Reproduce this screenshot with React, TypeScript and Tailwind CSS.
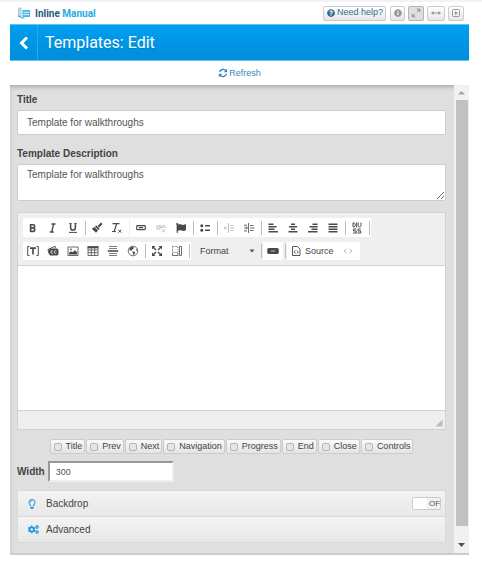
import React from "react";
import { FaCogs, FaFlag, FaInfoCircle, FaQuestionCircle, FaRegLightbulb } from "react-icons/fa";

interface IconProps {
  children: React.ReactNode;
}

// line icon on a 12 x 12 grid
const Icon = ({ children }: IconProps) => (
  <svg
    viewBox="0 0 12 12"
    className="size-3 shrink-0"
    fill="none"
    stroke="currentColor"
    strokeWidth="1"
    aria-hidden="true"
  >
    {children}
  </svg>
);

const Logo = () => (
  <svg viewBox="0 0 14 12" className="h-3 w-3.5 shrink-0" aria-hidden="true">
    <path d="M1.500 1.500 4 .8v7.500l-2.500.8z" fill="#c9e3ef" stroke="#8db9cd" strokeWidth=".8" />
    <path d="M1.200 9.500c1.500-.3 2.800.2 3.800 1.500h2.500" fill="none" stroke="#5a9dbd" strokeWidth="1.100" />
    <path d="M5.500 3H13v7H5.500z" fill="#4bb4e4" />
    <path d="M6.500 5.300H12M6.500 7.600H12" stroke="#e4f5fd" strokeWidth="1" />
  </svg>
);

const RefreshIcon = () => (
  <svg viewBox="0 0 12 12" className="size-2.5" fill="none" stroke="currentColor" strokeWidth="1.700" aria-hidden="true">
    <path d="M2 5a4.200 4.200 0 0 1 7.500-1.600M10 7a4.200 4.200 0 0 1-7.500 1.600" />
    <path d="M11 1v4H7zM1 11V7h4z" fill="currentColor" stroke="none" />
  </svg>
);

interface ToolProps {
  label: string;
  disabled?: boolean;
  children: React.ReactNode;
}

const Tool = ({ label, disabled, children }: ToolProps) => (
  <button
    type="button"
    aria-label={label}
    disabled={disabled}
    className="flex size-5 shrink-0 items-center justify-center text-[#4a4a4a] disabled:text-[#bbb]"
  >
    {children}
  </button>
);

const Separator = () => <span className="ml-0.5 mr-px h-3.5 w-px shrink-0 bg-[#bcbcbc]" />;

const headerButton =
  "flex h-[15px] items-center justify-center rounded-xs border border-[#ccc] bg-linear-to-b from-white to-[#e6e6e6]";

const HeaderTools = () => (
  <div className="flex gap-[3px]">
    <button type="button" className={`${headerButton} mr-px gap-px px-0.5 text-[9px] text-[#2f6f8f]`}>
      <FaQuestionCircle className="mx-px size-2" />
      Need help?
    </button>
    <button type="button" aria-label="Info" className={`${headerButton} w-[15px] text-[#999]`}>
      <FaInfoCircle className="size-2" />
    </button>
    <button
      type="button"
      aria-label="Expand"
      className="flex h-[15px] w-4 items-center justify-center rounded-xs border border-[#b5b5b5] bg-[#dedede] text-[#999]"
    >
      <Icon>
        <path d="M7 5 9.500 2.500M5 7 2.500 9.500" />
        <path d="M6.300 1.800h3.900v3.900zM1.800 6.300v3.900h3.900z" fill="currentColor" stroke="none" />
      </Icon>
    </button>
    <button type="button" aria-label="Full width" className={`${headerButton} w-[18px] text-[#999]`}>
      <Icon>
        <path d="M2 6h8" />
        <path d="M1 6l2.600-2v4zM11 6 8.400 4v4z" fill="currentColor" stroke="none" />
      </Icon>
    </button>
    <button type="button" aria-label="Dock" className={`${headerButton} w-4 text-[#999]`}>
      <Icon>
        <rect x="2.500" y="2.500" width="7" height="7" rx="1" />
        <path d="M4.800 4v4l3.200-2z" fill="currentColor" stroke="none" />
      </Icon>
    </button>
  </div>
);

const ToolbarTop = () => (
  <div className="flex gap-px">
    <div className="flex h-[19px] items-center bg-white pr-0.5">
      <Tool label="Bold">
        <Icon>
          <path d="M3.600 2v8M3.600 2.700h2.500a1.600 1.600 0 0 1 0 3.200H3.600h2.800a1.800 1.800 0 0 1 0 3.500H3.600" strokeWidth="1.600" />
        </Icon>
      </Tool>
      <Tool label="Italic">
        <Icon>
          <path d="M4.500 2h4M2.800 10h4M6.600 2 4.700 10" strokeWidth="1.300" />
        </Icon>
      </Tool>
      <Tool label="Underline">
        <Icon>
          <path d="M3.600 1.500v4.200a2.300 2.300 0 0 0 4.800 0V1.500" strokeWidth="1.500" />
          <path d="M2.400 1.500h2.200M7.400 1.500h2.200M2 10.400h8" />
        </Icon>
      </Tool>
      <Separator />
      <Tool label="Copy formatting">
        <Icon>
          <path d="M10.800 1.200 7.400 4.800" strokeWidth="2.200" />
          <path d="M5.200 3.300 8.700 6.800 7.400 8 4 4.500z" fill="currentColor" stroke="none" />
          <path d="M3.600 5 7 8.400 5 10.800.8 6.800z" fill="currentColor" stroke="none" />
        </Icon>
      </Tool>
      <Tool label="Remove format">
        <Icon>
          <path d="M1.500 1.700h7M1 9.500h3.800M5.600 1.700 3.200 9.500" strokeWidth="1.200" />
          <path d="m7.300 7.700 3 3M10.300 7.700l-3 3" />
        </Icon>
      </Tool>
    </div>
    <div className="flex h-[19px] items-center bg-white pl-px">
      <Tool label="Link">
        <Icon>
          <rect x="1.700" y="3.700" width="8.600" height="3.900" rx=".8" strokeWidth="1.200" />
          <path d="M3.800 5.600h4.400" strokeWidth="1.300" />
        </Icon>
      </Tool>
      <Tool label="Unlink" disabled>
        <Icon>
          <path d="M10 6V4H2v3h3.500M4 5.500h4M7 7.300l3 3M10 7.300l-3 3" />
        </Icon>
      </Tool>
      <Tool label="Anchor">
        <FaFlag className="size-2.5" />
      </Tool>
      <Separator />
      <Tool label="Bulleted list">
        <Icon>
          <path d="M6 3.700h5M6 8.300h5" strokeWidth="1.400" />
          <circle cx="2.800" cy="3.700" r="1.500" fill="currentColor" stroke="none" />
          <circle cx="2.800" cy="8.300" r="1.500" fill="currentColor" stroke="none" />
        </Icon>
      </Tool>
      <Separator />
      <Tool label="Decrease indent" disabled>
        <Icon>
          <path d="M5.500 1v10M7 3.500h3.500M7 6h4.500M7 8.500h3.500M1 6h3.500M2.700 4.300 1 6l1.700 1.700" strokeWidth=".9" />
        </Icon>
      </Tool>
      <Tool label="Increase indent">
        <Icon>
          <path d="M5.500 1v10M7 3.500h3.500M7 6h4.500M7 8.500h3.500M1 6h3.500M2.700 4.300 4.400 6 2.700 7.700M1 3.200h3M1 9h3" strokeWidth=".8" />
        </Icon>
      </Tool>
      <Separator />
      <Tool label="Align left">
        <Icon>
          <path d="M1.500 2.200h5M1.500 4.700h8M1.500 7.200h6M1.500 9.700h9.500" strokeWidth="1.600" />
        </Icon>
      </Tool>
      <Tool label="Center">
        <Icon>
          <path d="M4 2.200h4M2 4.700h8M4 7.200h4M1.500 9.700h9" strokeWidth="1.600" />
        </Icon>
      </Tool>
      <Tool label="Align right">
        <Icon>
          <path d="M5.500 2.200h5M2.500 4.700h8M4.500 7.200h6M1 9.700h9.500" strokeWidth="1.600" />
        </Icon>
      </Tool>
      <Tool label="Justify">
        <Icon>
          <path d="M1.500 2.200h9M1.500 4.700h9M1.500 7.200h9M1.500 9.700h9" strokeWidth="1.600" />
        </Icon>
      </Tool>
      <Separator />
      <Tool label="Create div">
        <Icon>
          <path d="M2 .9v4h1.200l1-1v-2l-1-1zM5.700.5v5M7.200.5v3.200l1.400 1.500L10 3.700V.5" />
          <path d="M5.300 7H2.500v2h2.800v2H2M9.800 7H7v2h2.800v2H6.500" />
        </Icon>
      </Tool>
      <Separator />
    </div>
  </div>
);

const ToolbarBottom = () => (
  <div className="flex h-[18px] items-center">
    <div className="flex h-full items-center bg-white">
      <Tool label="Placeholder">
        <Icon>
          <path d="M2.500 1.500H.7v9h1.800M9.500 1.500h1.800v9H9.500" />
          <path d="M3 3.200h6M6 3.200v6.300" strokeWidth="1.700" />
        </Icon>
      </Tool>
      <Tool label="Embed media">
        <Icon>
          <rect x="2.500" y="4" width="8.500" height="6" rx="1" fill="currentColor" />
          <path d="M1 4.500 8 1.300l1 2M1 4.500l1 4" />
          <path d="M5.800 6a1.300 1.300 0 1 0 0 2.200M9.300 6a1.300 1.300 0 1 0 0 2.200" stroke="#fff" strokeWidth=".8" />
        </Icon>
      </Tool>
      <Tool label="Image">
        <Icon>
          <rect x="1" y="2" width="10" height="8.500" strokeWidth=".8" />
          <path d="M2 9.500V7.800l2-1.500 1.500 1L8 5.300l2 2v2.200z" fill="currentColor" stroke="none" />
          <circle cx="4" cy="4.300" r=".9" fill="currentColor" stroke="none" />
        </Icon>
      </Tool>
      <Tool label="Table">
        <Icon>
          <path d="M.6 2.200h10.800" strokeWidth="2.200" />
          <path d="M1 1.500v9h10v-9M1 5h10M1 7.700h10M4.300 2v8.500M7.700 2v8.500" strokeWidth=".8" />
        </Icon>
      </Tool>
      <Tool label="Horizontal line">
        <Icon>
          <path d="M2 1.500h8M2 3.500h8M2 8.500h8M2 10.500h8" strokeWidth=".7" />
          <path d="M.8 6h10.400" strokeWidth="1.600" />
        </Icon>
      </Tool>
      <Tool label="IFrame">
        <Icon>
          <circle cx="6" cy="6" r="4.800" strokeWidth=".8" />
          <path
            d="M2.500 2.700 5.500 1.700 7 2.500 6.300 4 5 4.500 4.500 6 2.500 5zM5.500 6.300l2.500.7.200 1L6.500 10.200 5.800 8.500zM9.300 3.500l1 2.500-1.300-.5z"
            fill="currentColor"
            stroke="none"
          />
        </Icon>
      </Tool>
      <Separator />
      <Tool label="Maximize">
        <Icon>
          <path d="M2 2l3 3M10 2 7 5M2 10l3-3M10 10 7 7" strokeWidth="1.400" />
          <path d="M1 1h3.500L1 4.500zM11 1v3.500L7.500 1zM1 11V7.500L4.500 11zM11 11H7.500L11 7.500z" fill="currentColor" stroke="none" />
        </Icon>
      </Tool>
      <Tool label="Show blocks">
        <Icon>
          <path d="M1.500 1.500h5.500v6H1.500z" strokeWidth=".8" strokeDasharray="1 1" />
          <path d="M8.500 1.500h2v9h-2zM1.500 8v2.500H7V8" strokeWidth=".8" />
        </Icon>
      </Tool>
      <Separator />
    </div>
    <div className="flex h-full w-[68px] items-center pr-1 pl-[9px]">
      <select
        aria-label="Paragraph format"
        className="h-3.5 min-w-0 flex-1 appearance-none text-[9px] leading-3.5 text-[#444]"
      >
        <option>Format</option>
      </select>
      <svg viewBox="0 0 6 4" className="h-1 w-1.5" aria-hidden="true">
        <path d="M.5.5h5L3 3.500z" fill="#555" />
      </svg>
    </div>
    <Separator />
    <div className="flex h-full items-center bg-white">
      <Tool label="Button">
        <Icon>
          <rect x=".8" y="3.500" width="10.400" height="5" rx=".5" fill="currentColor" />
          <path d="M4.800 5v2M7.200 5v2M4.800 6h2.400" stroke="#bbb" strokeWidth=".7" />
        </Icon>
      </Tool>
    </div>
    <Separator />
    <div className="flex h-full items-center bg-white pl-[3px]">
      <button type="button" className="flex items-center gap-[3px] text-[9px] leading-3.5 text-[#444]">
        <Icon>
          <path d="M2.500 1.500h5L10 4v6.500H2.500zM5.500 5.500 4.200 7l1.300 1.500M7 5.500 8.300 7 7 8.500" strokeWidth=".9" />
        </Icon>
        Source
      </button>
      <span className="w-1" />
      <Tool label="Code snippet" disabled>
        <Icon>
          <path d="M4.500 4 2 6l2.500 2M7.500 4 10 6 7.500 8" />
        </Icon>
      </Tool>
      <span className="w-0.5" />
    </div>
  </div>
);

const parts = ["Title", "Prev", "Next", "Navigation", "Progress", "End", "Close", "Controls"];

const PartToggle = ({ name }: { name: string }) => (
  <label className="flex h-[15px] items-center gap-1 rounded-xs border border-[#ccc] bg-linear-to-b from-[#fafafa] to-[#e4e4e4] pr-0.5 pl-[3px] text-[9px] text-[#444]">
    <input type="checkbox" className="size-2 appearance-none rounded-xs border border-[#b5b5b5] bg-[#e6e6e6]" />
    {name}
  </label>
);

const ScrollTrack = () => (
  <div className="flex w-[15px] shrink-0 flex-col items-center bg-[#f1f1f1]" aria-hidden="true">
    <svg viewBox="0 0 15 15" className="size-[15px]">
      <path d="M4 9.500 7.500 6 11 9.500z" fill="#a3a3a3" />
    </svg>
    <div className="w-3 flex-1 bg-[#c1c1c1]" />
    <svg viewBox="0 0 15 27" className="h-[27px] w-[15px]">
      <path d="M4 17h7l-3.500 4z" fill="#505050" />
    </svg>
  </div>
);

const EditForm = () => (
  <form className="min-w-0 flex-1 pt-2 pr-2 pb-2.5 pl-[7px]">
    <label htmlFor="title" className="block text-[10px] leading-3.5 font-bold text-[#444]">
      Title
    </label>
    <input
      id="title"
      defaultValue="Template for walkthroughs"
      className="mt-[3px] block h-[25px] w-full rounded-xs border border-[#ccc] bg-white px-[9px] text-[10px] text-[#555]"
    />
    <label htmlFor="description" className="mt-3 block text-[10px] leading-3.5 font-bold text-[#444]">
      Template Description
    </label>
    <textarea
      id="description"
      defaultValue="Template for walkthroughs"
      className="mt-[3px] block h-[37px] w-full resize-y rounded-xs border border-[#ccc] bg-white px-[9px] py-1 text-[10px] leading-3 text-[#555]"
    />

    <div className="mt-[11px] border border-[#d1d1d1] bg-white">
      <div className="flex flex-col gap-[5px] border-b border-[#d1d1d1] bg-[#efefef] py-[5px] pl-[5px]">
        <ToolbarTop />
        <ToolbarBottom />
      </div>
      <textarea aria-label="Template content" className="block h-36 w-full resize-none bg-white p-2 text-[10px]" />
      <div className="flex h-[19px] items-end justify-end border-t border-[#d1d1d1] bg-[#efefef] p-0.5">
        <svg viewBox="0 0 8 8" className="size-2" aria-hidden="true">
          <path d="M7.500.5v7h-7z" fill="#bbb" />
        </svg>
      </div>
    </div>

    <div className="mt-[9px] flex flex-wrap justify-center gap-px">
      {parts.map((name) => (
        <PartToggle key={name} name={name} />
      ))}
    </div>

    <div className="mt-[7px] flex items-center gap-[3px]">
      <label htmlFor="width" className="text-[10px] leading-3 font-bold text-[#444]">
        Width
      </label>
      <input
        id="width"
        defaultValue="300"
        className="h-[21px] w-[126px] border-2 border-t-[#999] border-r-[#eee] border-b-[#eee] border-l-[#999] bg-white px-1.5 text-[9px] text-[#555]"
      />
    </div>

    <div className="mt-2 border border-[#d8d8d8] text-[10px] text-[#444]">
      <div className="flex h-[26px] items-center border-b border-[#d8d8d8] bg-linear-to-b from-[#f3f3f3] to-[#e8e8e8] pr-1 pl-[9px]">
        <FaRegLightbulb className="size-2.5 text-[#1a9ade]" />
        <span className="ml-[9px] flex-1">Backdrop</span>
        <label className="flex h-[13px] w-[29px] items-center overflow-hidden rounded-xs border border-[#ccc] bg-[#f1f1f1] text-[8px] text-[#555]">
          <input type="checkbox" role="switch" aria-label="Backdrop" className="h-full w-3.5 shrink-0 appearance-none bg-white" />
          <span className="pl-0.5">OF</span>
        </label>
      </div>
      <button
        type="button"
        className="flex h-[25px] w-full items-center bg-linear-to-b from-[#f3f3f3] to-[#e8e8e8] pl-2.5"
      >
        <FaCogs className="size-[11px] text-[#1a9ade]" />
        <span className="ml-[7px]">Advanced</span>
      </button>
    </div>
  </form>
);

export default function App() {
  return (
    <div className="min-h-screen border-t-2 border-[#f3f3f3] bg-white font-['Liberation_Sans',sans-serif]">
      <main className="mr-[13px] ml-2.5">
        <header className="flex h-[22px] items-center justify-between pr-[5px] pl-[7px]">
          <a href="#" className="flex items-center gap-1 font-[Roboto,sans-serif] text-[10px] font-bold text-[#275a76]">
            <Logo />
            <span>
              Inline <span className="text-[#28aae1]">Manual</span>
            </span>
          </a>
          <HeaderTools />
        </header>

        <div className="flex h-[37px] border-y border-[#66c2f5] bg-linear-to-b from-[#009ff0] to-[#008ddb] text-white">
          <button
            type="button"
            aria-label="Back"
            className="flex w-7 items-center justify-center border-r border-[#2fa8ea]"
          >
            <svg viewBox="0 0 14 14" className="size-3.5" fill="none" stroke="currentColor" strokeWidth="3" aria-hidden="true">
              <path d="M10 1.500 4.500 7l5.500 5.500" />
            </svg>
          </button>
          <h1 className="flex items-center pl-[7px] font-[Roboto,sans-serif] text-[16px] text-shadow-2xs">
            Templates: Edit
          </h1>
        </div>

        <div className="flex h-6 items-center justify-center">
          <a href="#" className="flex items-center gap-px text-[9px] leading-3.5 text-[#3a87bd]">
            <RefreshIcon />
            Refresh
          </a>
        </div>

        <div className="flex border-b-2 border-[#ccc] bg-[#dfdfdf] shadow-[inset_0_3px_4px_-1px_#aaa]">
          <EditForm />
          <ScrollTrack />
        </div>
      </main>
    </div>
  );
}
